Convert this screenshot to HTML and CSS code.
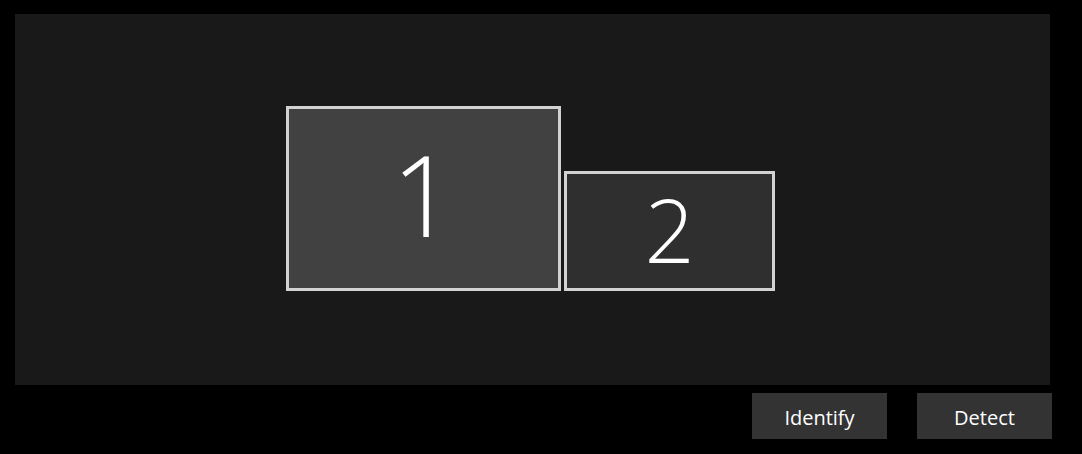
FILE: index.html
```html
<!DOCTYPE html>
<html>
<head>
<meta charset="utf-8">
<link rel="stylesheet" href="styles.css">
</head>
<body>
<div class="page">
  <div class="canvas">
    <div class="monitor m1"><span class="num n1">1</span></div>
    <div class="monitor m2"><span class="num n2">2</span></div>
  </div>
  <div class="actions">
    <button class="btn">Identify</button>
    <button class="btn">Detect</button>
  </div>
</div>
</body>
</html>
```
FILE: styles.css
```css
html, body {
  margin: 0;
  padding: 0;
  background: #000;
  width: 1082px;
  height: 454px;
  overflow: hidden;
}
.page {
  padding: 14px 30px 0 15px;
  font-family: "Open Sans", "Noto Sans", sans-serif;
}
.canvas {
  position: relative;
  width: 1035px;
  height: 371px;
  background: #191919;
}
.monitor {
  position: absolute;
  box-sizing: border-box;
  border: 3px solid #d2d2d2;
  display: flex;
  align-items: center;
  justify-content: center;
  color: #fff;
}
.m1 {
  left: 271px;
  top: 92px;
  width: 275px;
  height: 185px;
  background: #414141;
}
.m2 {
  left: 549px;
  top: 157px;
  width: 211px;
  height: 120px;
  background: #2f2f2f;
}
.num {
  font-weight: 300;
  line-height: 1;
}
.n1 { font-size: 112px; margin-top: -10px; }
.n2 { font-size: 88px; margin-top: -4px; }
.actions {
  display: flex;
  justify-content: flex-end;
  gap: 30px;
  margin-top: 8px;
}
.btn {
  width: 135px;
  height: 46px;
  background: #333;
  color: #fff;
  border: none;
  padding: 3px 0 0;
  font-family: "Open Sans", "Noto Sans", sans-serif;
  font-size: 20px;
}
```
